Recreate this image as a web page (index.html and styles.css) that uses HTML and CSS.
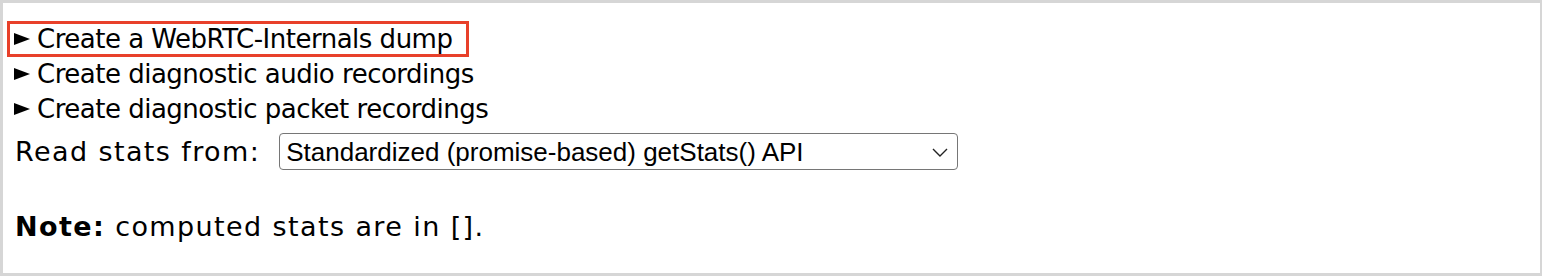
FILE: index.html
```html
<!DOCTYPE html>
<html>
<head>
<meta charset="utf-8">
<link rel="stylesheet" href="styles.css">
</head>
<body>
<div class="frame">
  <details class="dump">
    <summary class="row row-active"><span class="tri"></span><span class="label">Create a WebRTC-Internals dump</span></summary>
  </details>
  <details class="dump">
    <summary class="row"><span class="tri"></span><span class="label">Create diagnostic audio recordings</span></summary>
  </details>
  <details class="dump">
    <summary class="row"><span class="tri"></span><span class="label">Create diagnostic packet recordings</span></summary>
  </details>
  <div class="stats-row">
    <label class="stats-label" for="src">Read stats from:</label>
    <div class="select-wrap">
      <select id="src" class="stats-select">
        <option>Standardized (promise-based) getStats() API</option>
        <option>Legacy Non-Standard (callback-based) getStats() API</option>
      </select>
      <svg class="chev" width="16" height="9" viewBox="0 0 16 9"><path d="M1 1 L8 8 L15 1" fill="none" stroke="#222" stroke-width="1.4"/></svg>
    </div>
  </div>
  <p class="note"><b>Note:</b> computed stats are in [].</p>
</div>
</body>
</html>
```

FILE: styles.css
```css
html, body {
  margin: 0;
  padding: 0;
  background: #fff;
}
body {
  font-family: "DejaVu Sans", "Liberation Sans", sans-serif;
  color: #000;
}
.frame {
  box-sizing: border-box;
  width: 1542px;
  height: 276px;
  border-style: solid;
  border-color: #d6d6d6;
  border-width: 3px 2px 3px 3px;
  padding: 18px 0 0 4px;
}
.dump {
  margin: 0;
}
.row {
  list-style: none;
  display: flex;
  align-items: center;
  width: fit-content;
  height: 36px;
  box-sizing: border-box;
  padding: 0 14px 0 4px;
  font-size: 26px;
  letter-spacing: -0.5px;
  cursor: pointer;
  border: 3px solid transparent;
  margin-bottom: -1px;
}
.row::-webkit-details-marker { display: none; }
.row-active {
  border-color: #e8402a;
}
.tri {
  flex: none;
  width: 0;
  height: 0;
  border-top: 6.5px solid transparent;
  border-bottom: 6.5px solid transparent;
  border-left: 16px solid #000;
  margin-right: 7px;
}
.stats-row {
  display: flex;
  align-items: center;
  margin-top: 7px;
  padding-left: 8px;
}
.stats-label {
  font-size: 27px;
  letter-spacing: 1.4px;
  margin-right: 19px;
}
.select-wrap {
  position: relative;
}
.stats-select {
  appearance: none;
  -webkit-appearance: none;
  width: 679px;
  height: 37px;
  box-sizing: border-box;
  border: 1.5px solid #767676;
  border-radius: 4px;
  background: #fff;
  font-family: "Liberation Sans", Arial, sans-serif;
  font-size: 26px;
  color: #000;
  padding: 0 0 0 6px;
}
.chev {
  position: absolute;
  right: 10px;
  top: 15px;
  pointer-events: none;
}
.note {
  margin: 41px 0 0 8px;
  font-size: 27px;
  letter-spacing: 1.4px;
}
```
